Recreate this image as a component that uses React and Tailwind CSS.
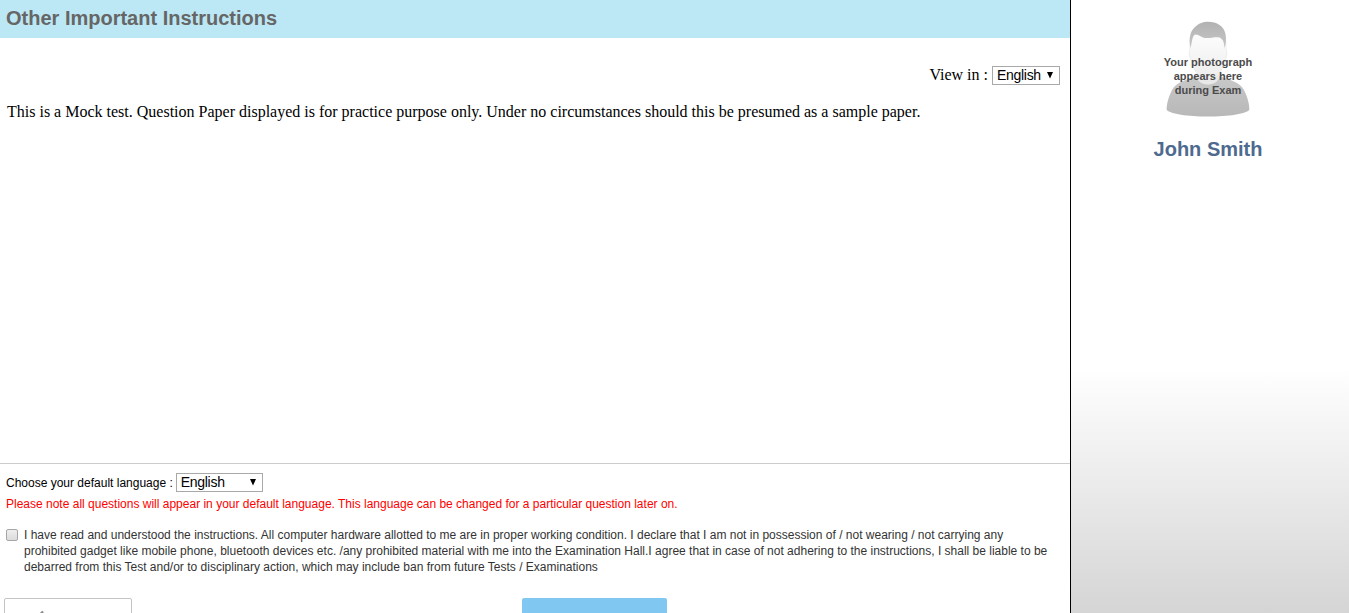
function LanguageSelect({ className }) {
  return (
    <button
      type="button"
      className={
        'flex h-[19px] items-center justify-between border border-[#a9a9a9] bg-white pl-1 pr-1.5 font-["Liberation_Sans",Arial,sans-serif] text-[14px] leading-[17px] tracking-[-0.3px] text-black ' +
        className
      }
    >
      <span>English</span>
      <svg width="6" height="7" viewBox="0 0 6 7" aria-hidden="true">
        <path d="M0 0h6L3 6.500z" fill="#000" />
      </svg>
    </button>
  );
}

function Photograph() {
  return (
    <div className="relative h-[98px] w-[92px]">
      <svg width="92" height="98" viewBox="0 0 92 98" className="block" aria-hidden="true">
        <defs>
          <linearGradient id="face" x1="0" y1="0" x2="0" y2="1">
            <stop offset="0" stopColor="#fdfdfd" />
            <stop offset="1" stopColor="#ededed" />
          </linearGradient>
          <linearGradient id="hair" x1="0" y1="0" x2="0" y2="1">
            <stop offset="0" stopColor="#b2b2b2" />
            <stop offset="1" stopColor="#c6c6c6" />
          </linearGradient>
          <linearGradient id="shirt" x1="0" y1="0" x2="0" y2="1">
            <stop offset="0" stopColor="#c9c9c9" />
            <stop offset="0.5" stopColor="#c0c0c0" />
            <stop offset="1" stopColor="#b8b8b8" />
          </linearGradient>
        </defs>
        <path
          d="M34 55C25 59 14 61 10 69C6 77 4.500 84 4.700 89C9 93 25 95.500 46 95.500C67 95.500 83 93 87.300 89C87.500 84 86 77 82 69C78 61 67 59 58 55Z"
          fill="url(#shirt)"
        />
        <path d="M34.500 48V56C37 66 55 66 57.500 56V48Z" fill="#e8e8e8" />
        <path
          d="M28.500 16C28 22 28 27 28 29C26 32 28 37 30 41C32 51 38 58 46 58C54 58 60 51 62 41C64 37 66 32 64 29C64 25 64 20 63 16C56 10 36 9 28.500 16Z"
          fill="url(#face)"
          stroke="#ededed"
        />
        <path
          d="M28.500 27C26.500 18 28 10 33 6C37 2 42 0.700 46 0.700C55 0.700 62 5 63.500 13C64.500 18 64 23 62.500 27C62 22 61.500 19 59 17.500C56 14.500 46 18.500 41 16.500C38 15 35 13 33 13.500C30 15 30 22 28.500 27Z"
          fill="url(#hair)"
        />
      </svg>
      <p className='absolute inset-x-0 top-[34px] text-center font-["Liberation_Sans",Arial,sans-serif] text-[11px] font-bold leading-[14px] text-[#4b4b4b]'>
        <span className="block whitespace-nowrap">Your photograph</span>
        <span className="block whitespace-nowrap">appears here</span>
        <span className="block whitespace-nowrap">during Exam</span>
      </p>
    </div>
  );
}

export default function App() {
  return (
    <div className='flex h-[613px] w-[1349px] overflow-hidden bg-white font-["Liberation_Sans",Arial,sans-serif]'>
      <main className="flex w-[1070px] flex-col">
        <header className="h-[38px] bg-[#bce8f5] pl-1.5">
          <h1 className="text-[20px] font-bold leading-[36px] text-[#666666]">Other Important Instructions</h1>
        </header>

        <section className='flex h-[425px] flex-col pt-7 font-["Liberation_Serif","Times_New_Roman",serif] text-[16px] text-black'>
          <div className="flex h-[19px] items-start justify-end gap-1 pr-2.5">
            <span className="leading-[18px]">View in :</span>
            <LanguageSelect className="w-[68px]" />
          </div>
          <p className="mt-[18px] whitespace-nowrap pl-[7px] leading-[18px]">
            This is a Mock test. Question Paper displayed is for practice purpose only. Under no circumstances should this be presumed as a sample paper.
          </p>
        </section>

        <section className="flex h-[150px] flex-col border-t border-[#cccccc] pt-[9px] text-[12px]">
          <div className="flex h-[19px] items-center gap-[3px] pl-1.5">
            <span className="text-black">Choose your default language :</span>
            <LanguageSelect className="w-[87px]" />
          </div>
          <p className="mt-1 pl-1.5 leading-4 text-[#ff0000]">
            Please note all questions will appear in your default language. This language can be changed for a particular question later on.
          </p>
          <label className="mt-[15px] flex pl-1.5">
            <input
              type="checkbox"
              className="mt-0.5 size-3 shrink-0 appearance-none rounded-[2px] border border-[#a6a6a6] bg-linear-to-b from-[#eeeeee] to-[#dcdcdc]"
            />
            <span className="ml-1.5 leading-4 text-[#333333]">
              <span className="block whitespace-nowrap">I have read and understood the instructions. All computer hardware allotted to me are in proper working condition. I declare that I am not in possession of / not wearing / not carrying any</span>
              <span className="block whitespace-nowrap">prohibited gadget like mobile phone, bluetooth devices etc. /any prohibited material with me into the Examination Hall.I agree that in case of not adhering to the instructions, I shall be liable to be</span>
              <span className="block whitespace-nowrap">debarred from this Test and/or to disciplinary action, which may include ban from future Tests / Examinations</span>
            </span>
          </label>
          <div className="mt-[23px] flex h-[15px] shrink-0 items-start gap-[390px] overflow-hidden pl-1">
            <button type="button" aria-label="Previous" className="h-9 w-32 rounded-[2px] border border-[#c4c4c4] bg-white pl-8">
              <svg width="10" height="12" viewBox="0 0 10 12" className="mb-0.5" aria-hidden="true">
                <path d="M6 2.500L2 6.500l4 4" fill="none" stroke="#888" strokeWidth="2.200" />
              </svg>
            </button>
            <button type="button" aria-label="Begin" className="h-9 w-[145px] rounded-[2px] bg-[#80c8f2]" />
          </div>
        </section>
      </main>

      <aside className="flex w-[279px] flex-col items-center border-l border-black bg-linear-to-b from-white from-[60%] to-[#d5d5d5] pr-1 pt-[21px]">
        <Photograph />
        <h2 className="mt-[18px] text-[20px] font-bold leading-6 text-[#4e6a8e]">John Smith</h2>
      </aside>
    </div>
  );
}
